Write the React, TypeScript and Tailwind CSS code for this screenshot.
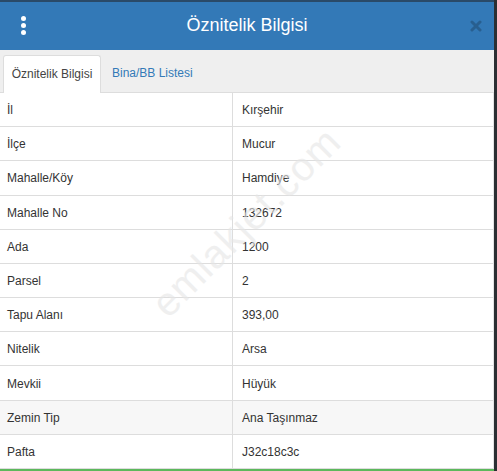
import React from "react";

const rows: [string, string][] = [
  ["İl", "Kırşehir"],
  ["İlçe", "Mucur"],
  ["Mahalle/Köy", "Hamdiye"],
  ["Mahalle No", "132672"],
  ["Ada", "1200"],
  ["Parsel", "2"],
  ["Tapu Alanı", "393,00"],
  ["Nitelik", "Arsa"],
  ["Mevkii", "Hüyük"],
  ["Zemin Tip", "Ana Taşınmaz"],
  ["Pafta", "J32c18c3c"],
];

export default function App() {
  return (
    <div
      className="relative w-[497px] h-[471px] overflow-hidden bg-white flex"
      style={{ fontFamily: '"Liberation Sans", Arial, sans-serif' }}
    >
      <div className="flex-1 flex flex-col">
        <div className="h-[2px] bg-[#2a4a68]" />
        <div className="h-[48px] bg-[#3379b7] flex items-center relative">
          <div className="w-[45px] flex flex-col items-center gap-[2px] pl-[1px]">
            <span className="w-[5px] h-[5px] rounded-full bg-white" />
            <span className="w-[5px] h-[5px] rounded-full bg-white" />
            <span className="w-[5px] h-[5px] rounded-full bg-white" />
          </div>
          <div className="flex-1 text-center text-[18px] text-white leading-none pb-[2px]">
            Öznitelik Bilgisi
          </div>
          <div className="w-[45px] flex justify-end pr-[12px]">
            <svg width="12" height="12" viewBox="0 0 12 12">
              <path d="M2 2 L10 10 M10 2 L2 10" stroke="#285f90" strokeWidth="3" strokeLinecap="round" />
            </svg>
          </div>
        </div>
        <div className="h-[43px] bg-[#efefef] flex items-end pl-[3px] border-b border-[#dddddd]">
          <div className="h-[38px] w-[98px] bg-white border border-b-0 border-[#dddddd] rounded-t-[3px] flex items-center justify-center text-[12px] text-[#444] mb-[-1px]">
            Öznitelik Bilgisi
          </div>
          <div className="h-[38px] flex items-center pl-[11px] text-[12px] text-[#337ab7]">
            Bina/BB Listesi
          </div>
        </div>
        <div className="flex flex-col border-r border-[#e3e3e3]">
          {rows.map(([k, v], i) => (
            <div
              key={k}
              className={`flex h-[34.2px] border-b border-[#dddddd] text-[12px] text-[#333] ${
                i === 9 ? "bg-[#f7f7f7]" : "bg-white"
              }`}
            >
              <div className="w-[233px] border-r border-[#dddddd] flex items-center pl-[7px] pt-[1px]">{k}</div>
              <div className="flex-1 flex items-center pl-[9px] pt-[1px]">{v}</div>
            </div>
          ))}
        </div>
        <div className="flex-1 bg-white" />
        <div className="h-[2px] bg-[#5cb85c]" />
      </div>
      <div className="w-[3px] bg-[#2b2f33]" />
      <div className="absolute left-[122px] top-[192px] rotate-[-45deg] text-[40px] text-[#e6e6e6] opacity-60 pointer-events-none select-none tracking-wide">
        emlakjet.com
      </div>
    </div>
  );
}
